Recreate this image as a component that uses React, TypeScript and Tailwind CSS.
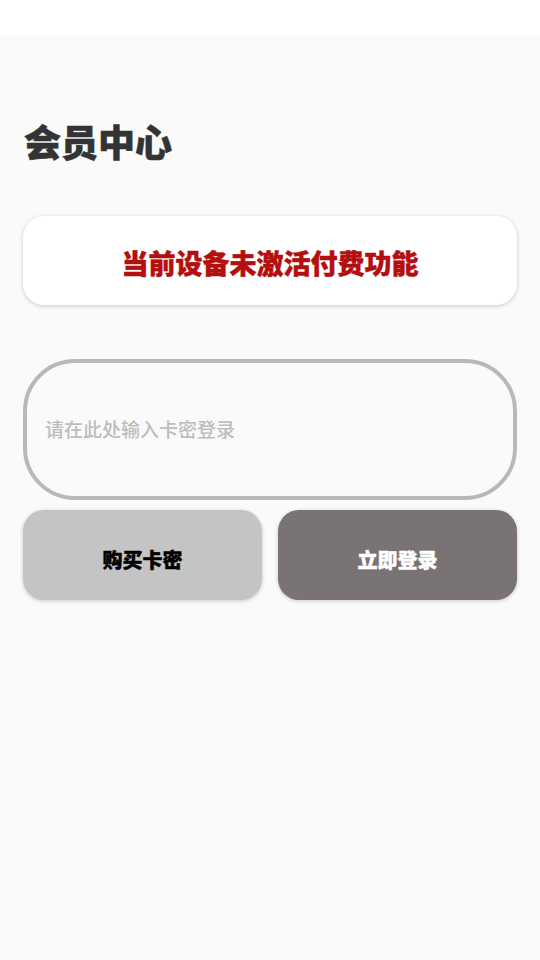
import React from 'react';

const font = { fontFamily: '"Noto Sans CJK SC", "Noto Sans", sans-serif' };

export default function App() {
    return (
        <div className="w-[540px] h-[960px] flex flex-col bg-[#fafafa]" style={font}>
            <div className="h-9 bg-white" />
            <div className="flex flex-col px-[23px]">
                <h1 className="mt-[82px] pl-px text-[37px] leading-[46px] font-black text-[#333333] [-webkit-text-stroke:0.6px_#333333]">会员中心</h1>

                <div className="mt-[52px] h-[89px] rounded-[21px] bg-white shadow-[0_1px_4px_rgba(0,0,0,0.2)] flex items-center justify-center">
                    <span className="text-[27px] font-black text-[#b40e0e] pt-[5px] [-webkit-text-stroke:0.5px_#b40e0e]">当前设备未激活付费功能</span>
                </div>

                <div className="mt-[54px] h-[141px] rounded-[52px] border-4 border-[#b8b8b8] flex items-center px-[18px]">
                    <input
                        className="w-full bg-transparent outline-none text-[19px] font-medium text-[#333] placeholder:text-[#bdbdbd]"
                        placeholder="请在此处输入卡密登录"
                        style={font}
                    />
                </div>

                <div className="mt-[10px] grid grid-cols-2 gap-4">
                    <button className="h-[90px] pt-[10px] rounded-[21px] bg-[#c4c4c4] shadow-[0_1px_4px_rgba(0,0,0,0.2)] text-[20px] font-black text-black [-webkit-text-stroke:0.4px_#000]" style={font}>
                        购买卡密
                    </button>
                    <button className="h-[90px] pt-[10px] rounded-[21px] bg-[#797373] shadow-[0_1px_4px_rgba(0,0,0,0.2)] text-[20px] font-black text-white [-webkit-text-stroke:0.4px_#fff]" style={font}>
                        立即登录
                    </button>
                </div>
            </div>
        </div>
    );
}
